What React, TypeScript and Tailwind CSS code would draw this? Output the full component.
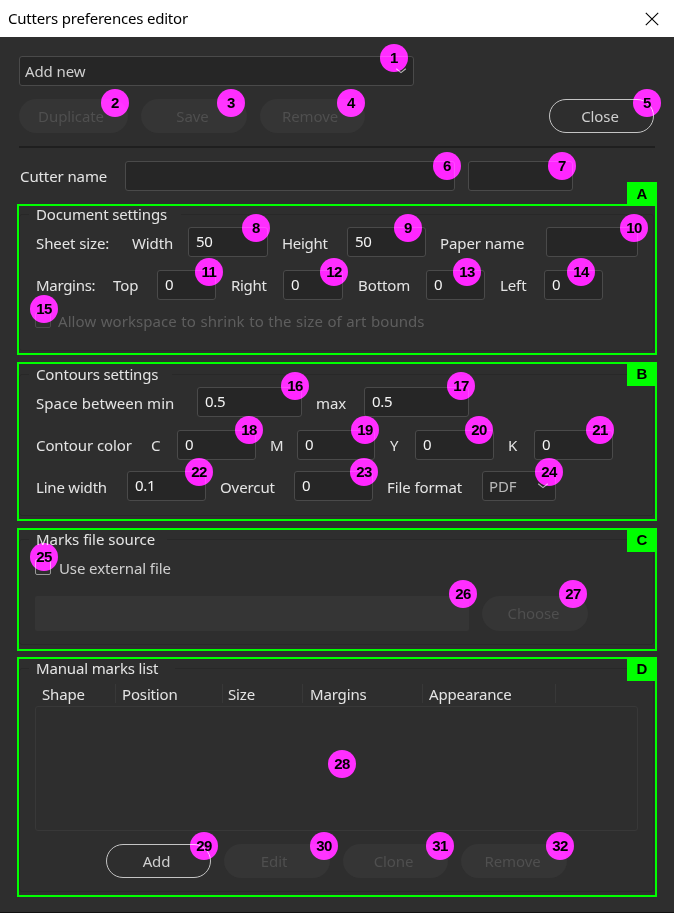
import type { ReactNode } from "react";
import clsx from "clsx";

function Label({ className, children }: { className?: string; children: ReactNode }) {
  return (
    <span className={clsx("block shrink-0 whitespace-nowrap pl-px text-[#e4e4e4] leading-[30px]", className)}>
      {children}
    </span>
  );
}

function Field({ className, value }: { className?: string; value?: string }) {
  return (
    <div
      className={clsx(
        "h-[30px] shrink-0 rounded-[3px] border border-[#4a4a4a] bg-[#262626] pl-[7px] leading-[26px] tracking-[-0.3px] text-[#f4f4f4]",
        className,
      )}
    >
      {value}
    </div>
  );
}

function Chevron() {
  return (
    <svg width="12" height="6" viewBox="0 0 12 6" fill="none" stroke="#b4b4b4" strokeWidth="1.1">
      <path d="M1.2 0.8 L6 4.6 L10.8 0.8" />
    </svg>
  );
}

function Pill({ className, active, children }: { className?: string; active?: boolean; children: ReactNode }) {
  return (
    <div
      className={clsx(
        "flex h-[34px] shrink-0 items-center justify-center rounded-full",
        active ? "border border-[#c4c4c4] text-[#cfcfcf]" : "bg-[#353535] text-[#4f4f4f]",
        className,
      )}
    >
      {children}
    </div>
  );
}

function Panel({
  tag,
  title,
  className,
  tagClass,
  frameClass,
  legendClass,
  children,
}: {
  tag: string;
  title: string;
  className: string;
  tagClass: string;
  frameClass: string;
  legendClass: string;
  children: ReactNode;
}) {
  return (
    <section className={clsx("relative ml-[17px] w-[640px] border-2 border-[#00ff00]", className)}>
      <fieldset className={clsx("w-[635px] rounded-[3px] border border-[#282828] pl-[15px]", frameClass)}>
        <legend className={clsx("-ml-[6px] h-4 whitespace-nowrap pl-[7px] leading-4 text-[#e4e4e4]", legendClass)}>
          {title}
        </legend>
        {children}
      </fieldset>
      <span
        className={clsx(
          "absolute -right-[2px] flex w-[30px] items-center justify-center bg-[#00ff00] font-['Liberation_Sans',sans-serif] text-[15px] font-bold tracking-normal text-black",
          tagClass,
        )}
      >
        {tag}
      </span>
    </section>
  );
}

const callouts = [
  "left-[380px] top-[44px]",
  "left-[101px] top-[89px]",
  "left-[217px] top-[89px]",
  "left-[337px] top-[89px]",
  "left-[633px] top-[89px]",
  "left-[433px] top-[152px]",
  "left-[548px] top-[152px]",
  "left-[242px] top-[214px]",
  "left-[394px] top-[214px]",
  "left-[620px] top-[214px]",
  "left-[195px] top-[258px]",
  "left-[320px] top-[258px]",
  "left-[453px] top-[258px]",
  "left-[567px] top-[258px]",
  "left-[30px] top-[295px]",
  "left-[281px] top-[372px]",
  "left-[447px] top-[372px]",
  "left-[235px] top-[416px]",
  "left-[351px] top-[416px]",
  "left-[465px] top-[416px]",
  "left-[586px] top-[416px]",
  "left-[185px] top-[458px]",
  "left-[350px] top-[458px]",
  "left-[535px] top-[458px]",
  "left-[30px] top-[543px]",
  "left-[449px] top-[580px]",
  "left-[559px] top-[580px]",
  "left-[328px] top-[750px]",
  "left-[190px] top-[832px]",
  "left-[310px] top-[832px]",
  "left-[426px] top-[832px]",
  "left-[546px] top-[832px]",
];

function Callout({ place, n }: { place: string; n: number }) {
  return (
    <div className={clsx("absolute size-7", place)}>
      <div className="size-7 rounded-full bg-[#ff00ff] mix-blend-lighten" />
      <span className="absolute inset-0 text-center font-['Liberation_Sans',sans-serif] text-[15px] font-bold leading-7 tracking-[-0.5px] text-black">
        {n}
      </span>
    </div>
  );
}

export default function App() {
  return (
    <div className="relative h-[913px] w-[674px] overflow-hidden border-b border-[#111111] bg-[#2e2e2e] font-['Noto_Sans',sans-serif] text-[15px] tracking-[-0.1px]">
      <header className="flex h-[37px] items-center justify-between bg-white pl-2 pr-[15px] text-black">
        <span className="tracking-[-0.2px]">Cutters preferences editor</span>
        <svg width="14" height="14" viewBox="0 0 14 14" stroke="#000" strokeWidth="1.1">
          <path d="M0.8 0.8 L13.2 13.2 M13.2 0.8 L0.8 13.2" />
        </svg>
      </header>

      <div className="ml-[19px] mt-[19px] flex h-[30px] w-[395px] items-center justify-between rounded-[3px] border border-[#4a4a4a] bg-[#262626] pl-[5px] pr-[6px] text-[#cfcfcf]">
        <span className="leading-[28px]">Add new</span>
        <Chevron />
      </div>

      <div className="ml-[19px] mt-[13px] flex">
        <Pill className="w-[109px] pr-[5px]">Duplicate</Pill>
        <Pill className="ml-[13px] w-[106px] pr-[3px]">Save</Pill>
        <Pill className="ml-[13px] w-[105px] pr-[5px]">Remove</Pill>
        <Pill active className="ml-[184px] w-[105px] pr-[3px]">Close</Pill>
      </div>

      <div className="ml-[19px] mt-[13px] h-[2px] w-[636px] bg-[#1f1f1f]" />

      <div className="mt-[13px] flex pl-[19px]">
        <Label className="w-[106px]">Cutter name</Label>
        <Field className="w-[330px]" />
        <Field className="ml-[13px] w-[105px]" />
      </div>

      <Panel
        tag="A"
        title="Document settings"
        className="mt-[13px] h-[151px]"
        tagClass="-top-[24px] h-6"
        frameClass="h-[145px]"
        legendClass="w-[152px] tracking-[-0.15px]"
      >
        <div className="mt-[5px] flex">
          <Label className="w-[96px] pt-px">Sheet size:</Label>
          <Label className="w-[57px] pt-px">Width</Label>
          <Field className="w-[80px]" value="50" />
          <Label className="ml-[13px] w-[66px] pt-px tracking-[-0.3px]">Height</Label>
          <Field className="w-[79px]" value="50" />
          <Label className="ml-[13px] w-[107px] pt-px">Paper name</Label>
          <Field className="w-[92px]" />
        </div>
        <div className="mt-[12px] flex">
          <Label className="w-[77px] tracking-[-0.3px]">Margins:</Label>
          <Label className="w-[45px]">Top</Label>
          <Field className="w-[59px]" value="0" />
          <Label className="ml-[14px] w-[53px] tracking-[-0.3px]">Right</Label>
          <Field className="w-[60px]" value="0" />
          <Label className="ml-[14px] w-[69px]">Bottom</Label>
          <Field className="w-[59px]" value="0" />
          <Label className="ml-[14px] w-[45px]">Left</Label>
          <Field className="w-[59px]" value="0" />
        </div>
        <div className="mt-[11px] flex h-5">
          <span className="mt-px size-4 rounded-[2px] border border-[#4a4a4a]" />
          <span className="ml-[7px] whitespace-nowrap leading-5 tracking-[0.07px] text-[#5e5e5e] [word-spacing:0.5px]">
            Allow workspace to shrink to the size of art bounds
          </span>
        </div>
      </Panel>

      <Panel
        tag="B"
        title="Contours settings"
        className="mt-[7px] h-[159px] pt-[2px]"
        tagClass="-top-[2px] h-6"
        frameClass="h-[150px]"
        legendClass="w-[143px] tracking-[-0.15px]"
      >
        <div className="mt-[5px] flex">
          <Label className="w-[162px] pt-px tracking-[0.05px]">Space between min</Label>
          <Field className="w-[105px]" value="0.5" />
          <Label className="ml-[13px] w-[49px] pt-px">max</Label>
          <Field className="w-[105px]" value="0.5" />
        </div>
        <div className="mt-[12px] flex">
          <Label className="w-[115px]">Contour color</Label>
          <Label className="w-[27px]">C</Label>
          <Field className="w-[79px]" value="0" />
          <Label className="ml-[13px] w-[28px]">M</Label>
          <Field className="w-[78px]" value="0" />
          <Label className="ml-[14px] w-[26px]">Y</Label>
          <Field className="w-[79px]" value="0" />
          <Label className="ml-[13px] w-[27px]">K</Label>
          <Field className="w-[79px]" value="0" />
        </div>
        <div className="mt-[11px] flex">
          <Label className="w-[92px] pt-px tracking-[-0.2px]">Line width</Label>
          <Field className="w-[79px]" value="0.1" />
          <Label className="ml-[13px] w-[75px] pt-px">Overcut</Label>
          <Field className="w-[79px]" value="0" />
          <Label className="ml-[13px] w-[96px] pt-px">File format</Label>
          <div className="flex h-[30px] w-[74px] items-center justify-between rounded-[3px] border border-[#4a4a4a] bg-[#262626] pl-[6px] pr-[6px] text-[#b8b8b8]">
            <span className="pt-px">PDF</span>
            <Chevron />
          </div>
        </div>
      </Panel>

      <Panel
        tag="C"
        title="Marks file source"
        className="mt-[7px] h-[123px] pt-px"
        tagClass="-top-[2px] h-6"
        frameClass="h-[114px]"
        legendClass="w-[138px] tracking-[-0.03px]"
      >
        <div className="mt-[11px] flex h-5">
          <span className="mt-px size-4 rounded-[2px] border border-[#999999]" />
          <span className="ml-[8px] whitespace-nowrap leading-5 text-[#cfcfcf]">Use external file</span>
        </div>
        <div className="mt-[18px] flex">
          <div className="h-[35px] w-[434px] rounded-[2px] bg-[#353535]" />
          <Pill className="ml-[13px] h-[35px] w-[106px] pr-[3px]">Choose</Pill>
        </div>
      </Panel>

      <Panel
        tag="D"
        title="Manual marks list"
        className="mt-[6px] h-[240px] pt-px"
        tagClass="-top-[2px] h-6"
        frameClass="h-[232px]"
        legendClass="w-[146px] tracking-[-0.15px]"
      >
        <div className="mt-[8px] flex h-[19px] leading-5 tracking-[-0.15px] text-[#e4e4e4]">
          <span className="w-[81px] border-r border-[#383838] pl-[7px]">Shape</span>
          <span className="w-[107px] border-r border-[#383838] pl-[6px]">Position</span>
          <span className="w-[80px] border-r border-[#383838] pl-[5px]">Size</span>
          <span className="w-[120px] border-r border-[#383838] pl-[7px]">Margins</span>
          <span className="w-[133px] border-r border-[#383838] pl-[6px]">Appearance</span>
        </div>
        <div className="mt-[3px] h-[125px] w-[603px] rounded-[3px] border border-[#383838]" />
        <div className="ml-[71px] mt-[13px] flex">
          <Pill active className="w-[105px] pr-[4px]">Add</Pill>
          <Pill className="ml-[13px] w-[106px] pr-[6px]">Edit</Pill>
          <Pill className="ml-[13px] w-[105px] pr-[4px]">Clone</Pill>
          <Pill className="ml-[13px] w-[106px] pr-[3px]">Remove</Pill>
        </div>
      </Panel>

      {callouts.map((place, i) => (
        <Callout key={place} place={place} n={i + 1} />
      ))}
    </div>
  );
}
